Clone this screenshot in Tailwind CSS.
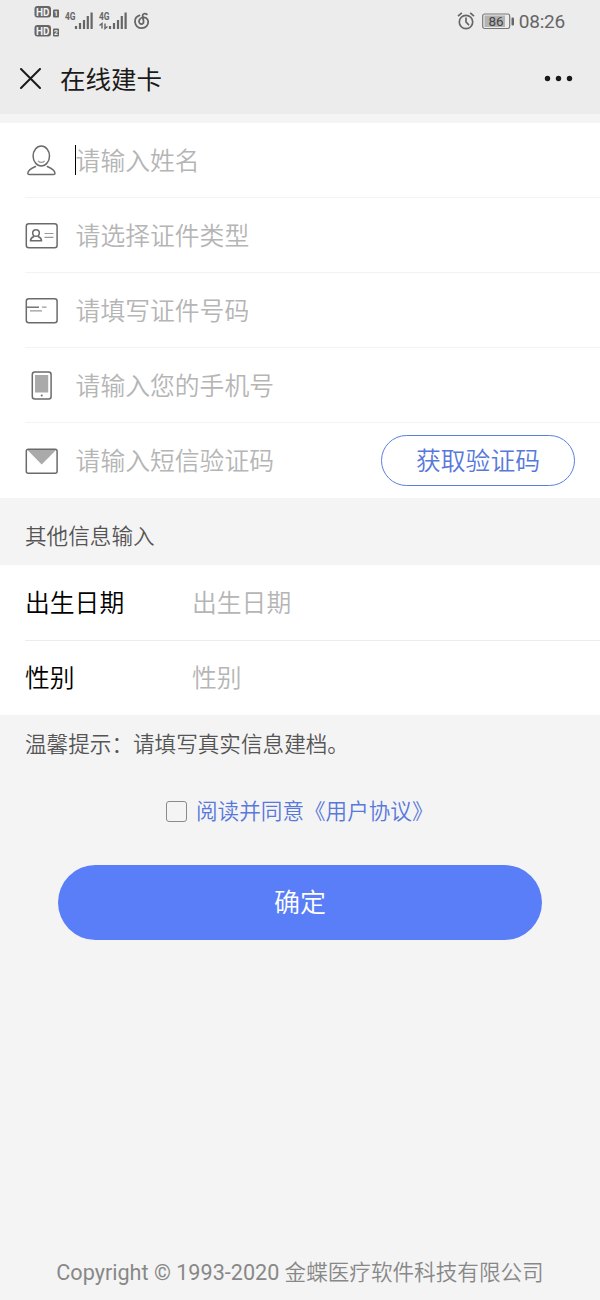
<!DOCTYPE html>
<html lang="zh-CN">
<head>
    <meta charset="UTF-8">
    <meta name="viewport" content="width=device-width, initial-scale=1.0">
    <title>在线建卡</title>
    <script src="https://cdn.jsdelivr.net/npm/@tailwindcss/browser@4"></script>
</head>

<body class="bg-[#f4f4f4] font-['Roboto','Noto_Sans_CJK_SC',sans-serif] font-[350]">

    <div class="flex flex-col h-[1300px] w-[600px] overflow-hidden">

        <!-- status bar -->
        <div class="h-[42px] bg-[#ececec] flex justify-between items-center pl-[34px] pr-[35px] shrink-0">
            <svg width="120" height="34" viewBox="34 4 120 34" fill="none">
                <rect x="34.500" y="6" width="16.500" height="11.500" rx="3" fill="#666"/>
                <rect x="34.500" y="25" width="16.500" height="11.500" rx="3" fill="#666"/>
                <g fill="#f2f2f2" font-family="Roboto" font-weight="700" font-size="10.5">
                    <text x="36" y="15.500" textLength="13.5" lengthAdjust="spacingAndGlyphs">HD</text>
                    <text x="36" y="34.500" textLength="13.5" lengthAdjust="spacingAndGlyphs">HD</text>
                </g>
                <rect x="53" y="9.500" width="6" height="8" rx="1" fill="#666"/>
                <rect x="53" y="28.500" width="6" height="8" rx="1" fill="#666"/>
                <g fill="#f2f2f2" font-family="Roboto" font-weight="700" font-size="7">
                    <text x="54" y="16">1</text>
                    <text x="54" y="35">2</text>
                </g>
                <g fill="#666" font-family="Roboto" font-weight="700" font-size="10.5">
                    <text x="65" y="19.700" textLength="10.5" lengthAdjust="spacingAndGlyphs">4G</text>
                    <text x="99" y="19.700" textLength="10.5" lengthAdjust="spacingAndGlyphs">4G</text>
                </g>
                <path d="M76 29v-3M80 29v-6M84 29v-9M87.800 29v-13M91.600 29v-16.500M110 29v-3M114 29v-6M118 29v-9M121.800 29v-13M125.600 29v-16.500" stroke="#666" stroke-width="2.200"/>
                <path d="M99.500 25.500l2.500-2v5M105 23.500v5l2.500-2" stroke="#666" stroke-width="1.400"/>
                <path d="M139.500 15.400c-3 1-4.700 3.500-4.500 6.600.3 3.800 3.300 6.300 6.800 6.200 3.900-.1 6.700-3 6.400-6.700-.3-3.200-3.200-4.800-6-4-2.900.9-4.100 4-2.400 5.800 1.500 1.500 4 .5 3.800-1.800l-1-5.500c-.3-2.300 2.400-3.200 4.200-1.700" stroke="#666" stroke-width="1.800" stroke-linecap="round"/>
            </svg>
            <div class="flex items-center">
                <svg width="18" height="20" viewBox="0 0 18 20" fill="none" stroke="#666" stroke-width="1.700">
                    <circle cx="9" cy="11" r="6.700"/>
                    <path d="M9 6.500V11l3 3.200M1 5.200l3.800-3.400M17 5.200l-3.800-3.400"/>
                </svg>
                <svg width="33" height="17" viewBox="0 0 33 17" class="ml-[7px]">
                    <rect x=".7" y="1" width="27" height="14.500" rx="2" fill="none" stroke="#777" stroke-width="1.200"/>
                    <rect x="2.500" y="2.500" width="20.500" height="11.500" fill="#b3b3b3"/>
                    <rect x="29.500" y="4.500" width="2.500" height="8" rx="1" fill="#666"/>
                    <text x="6.500" y="13" font-family="Roboto" font-size="13.500" font-weight="400" fill="#444">86</text>
                </svg>
                <span class="ml-[4px] mt-px text-[19px] leading-[22px] text-[#666] font-normal tracking-[-0.2px]">08:26</span>
            </div>
        </div>

        <!-- title bar -->
        <div class="h-[72px] bg-[#ececec] flex items-center pl-5 pr-[27px] shrink-0">
            <svg width="21" height="21" viewBox="0 0 21 21" stroke="#1a1a1a" stroke-width="2" stroke-linecap="round">
                <path d="M1 1l19 19M20 1L1 20"/>
            </svg>
            <h1 class="ml-[19px] pt-[3px] flex-1 text-[25.500px] leading-[36px] text-[#1a1a1a] font-normal">在线建卡</h1>
            <svg width="29" height="7" viewBox="0 0 29 7" fill="#1a1a1a">
                <circle cx="3.500" cy="3.500" r="2.700"/>
                <circle cx="14.500" cy="3.500" r="2.700"/>
                <circle cx="25.500" cy="3.500" r="2.700"/>
            </svg>
        </div>

        <!-- card form -->
        <div class="mt-[9px] bg-white pl-[25px] text-[24.800px] leading-[36px] text-[#b5b5b5] shrink-0">
            <div class="h-[75px] flex items-center border-b border-[#f3f3f3]">
                <svg width="33" height="33" viewBox="0 0 33 33" fill="none" stroke="#6b6b6b" stroke-width="1.500">
                    <ellipse cx="16.300" cy="12" rx="8.200" ry="10"/>
                    <path d="M13 17q3.300 2.800 6.600 0" stroke="#999" stroke-width="1.200"/>
                    <path d="M10.500 22.500C6 24.500 3 26 2.800 29.200q0 1.300 1.400 1.300h24.400q1.400 0 1.400-1.300C29.800 26 26.800 24.500 22.300 22.500" stroke-linecap="round"/>
                </svg>
                <span class="ml-[17px] -mr-[0.4px] w-px h-[30px] bg-black"></span>
                <span class="pt-[3px]">请输入姓名</span>
            </div>
            <div class="h-[75px] flex items-center border-b border-[#f3f3f3]">
                <svg width="33" height="33" viewBox="0 0 33 33" fill="none" stroke="#6b6b6b" stroke-width="1.500">
                    <rect x="1.300" y="4.800" width="30.800" height="24" rx="2.500"/>
                    <circle cx="11" cy="14" r="3.300"/>
                    <path d="M9 17.500c-2.200.8-3.500 2-3.500 4.200h11c0-2.200-1.300-3.400-3.500-4.200"/>
                    <path d="M19.500 14.500h9M19.500 18.300h9" stroke="#999" stroke-width="1.200"/>
                </svg>
                <span class="ml-[17.600px] pt-[3px]">请选择证件类型</span>
            </div>
            <div class="h-[75px] flex items-center border-b border-[#f3f3f3]">
                <svg width="33" height="33" viewBox="0 0 33 33" fill="none" stroke="#6b6b6b" stroke-width="1.500">
                    <rect x="1.300" y="4.800" width="30.800" height="24" rx="2.500"/>
                    <path d="M1.500 13.200h12.500" stroke-width="1.400"/>
                    <path d="M17 13.200h4.500M5 16.800h12" stroke="#999" stroke-width="1.200"/>
                </svg>
                <span class="ml-[17.600px] pt-[3px]">请填写证件号码</span>
            </div>
            <div class="h-[75px] flex items-center border-b border-[#f3f3f3]">
                <svg width="33" height="33" viewBox="0 0 33 33" fill="none" stroke="#6b6b6b" stroke-width="1.500">
                    <rect x="7.300" y="3" width="18.800" height="27" rx="2.500"/>
                    <rect x="10" y="6" width="13.200" height="17.500" fill="#aaa" stroke="none"/>
                    <circle cx="16.700" cy="26.500" r="1" fill="#6b6b6b" stroke="none"/>
                </svg>
                <span class="ml-[17.600px] pt-[3px]">请输入您的手机号</span>
            </div>
            <div class="h-[75px] flex items-center pr-[25px]">
                <svg width="33" height="33" viewBox="0 0 33 33" fill="none" stroke="#6b6b6b" stroke-width="1.500">
                    <path d="M2 5.500h29.500L16.700 20.500z" fill="#aaa" stroke="none"/>
                    <rect x="1.300" y="5.300" width="30.800" height="24" rx="2"/>
                </svg>
                <span class="ml-[17.600px] pt-[3px] flex-1">请输入短信验证码</span>
                <button class="w-[194px] h-[51px] pt-[3px] rounded-full border border-[#5b7fe0] text-[#5878dc]">获取验证码</button>
            </div>
        </div>

        <div class="h-[67px] pl-[25px] pt-[11px] flex items-center text-[21.600px] text-[#555] shrink-0">其他信息输入</div>

        <!-- other info -->
        <div class="bg-white pl-[25px] text-[24.800px] leading-[36px] text-black shrink-0">
            <div class="h-[76px] pt-[2px] flex items-center border-b border-[#ececec]">
                <span class="w-[167px]">出生日期</span>
                <span class="text-[#b5b5b5]">出生日期</span>
            </div>
            <div class="h-[74px] pt-[2px] flex items-center">
                <span class="w-[167px]">性别</span>
                <span class="text-[#b5b5b5]">性别</span>
            </div>
        </div>

        <p class="mt-[14px] pl-[25px] text-[21.600px] leading-[32px] text-[#555] shrink-0">温馨提示：请填写真实信息建档。</p>

        <label class="mt-[33px] pl-[166px] flex items-center font-['Noto_Sans_CJK_SC',sans-serif] text-[21.600px] leading-[32px] text-[#5878dc] shrink-0">
            <span class="w-[21px] h-[21px] mr-[9px] rounded-[3px] border border-[#8a8a8a]"></span>
            <span class="pb-[2px]">阅读并同意《用户协议》</span>
        </label>

        <button class="mt-[37px] mx-[58px] h-[75px] pt-[2px] rounded-full bg-[#597ef7] text-white text-[26px] shrink-0">确定</button>

        <footer class="mt-auto pb-[11px] text-center text-[21.600px] leading-[32px] text-[#888]"><span class="font-normal">Copyright © 1993-2020</span> 金蝶医疗软件科技有限公司</footer>
    </div>
</body>
</html>
